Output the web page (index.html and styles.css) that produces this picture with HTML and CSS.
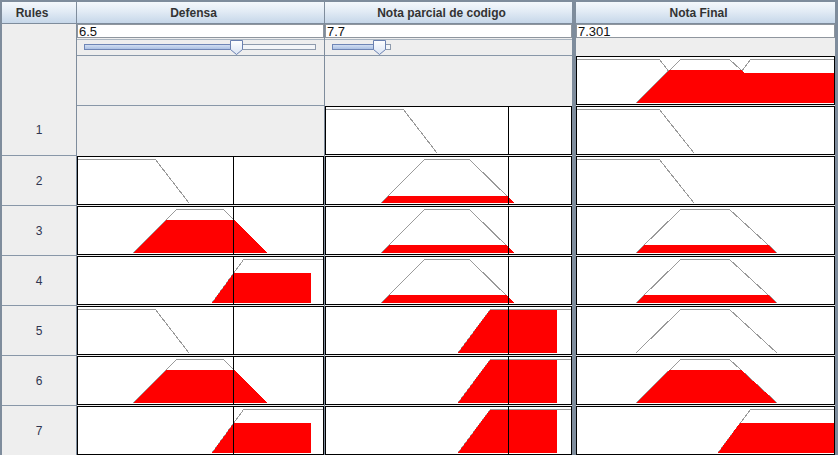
FILE: index.html
```html
<!DOCTYPE html>
<html>
<head>
<meta charset="utf-8">
<link rel="stylesheet" href="styles.css">
</head>
<body>
<div class="table">
  <div class="hd c1 rh">Rules</div>
  <div class="hd c3 rh">Defensa</div>
  <div class="hd c5 rh">Nota parcial de codigo</div>
  <div class="hd c7 rh">Nota Final</div>

  <!-- row 0: inputs -->
  <div class="rl c1 r0"></div>
  <div class="inp c3 r0">
    <div class="field">6.5</div>
    <div class="slider">
      <svg width="247" height="15" viewBox="77 40 247 15">
        <defs>
          <linearGradient id="tf" x1="0" y1="0" x2="0" y2="1"><stop offset="0" stop-color="#d6e2f4"/><stop offset="1" stop-color="#a7bde2"/></linearGradient>
          <linearGradient id="th" x1="0" y1="0" x2="0" y2="1"><stop offset="0" stop-color="#ffffff"/><stop offset="1" stop-color="#d9e3f3"/></linearGradient>
        </defs>
        <rect class="trk" x="84.5" y="44.5" width="231" height="5"/>
        <rect class="trkf" x="84.5" y="44.5" width="152" height="5"/>
        <path class="thumb" d="M230.5 40.5 H242.5 V49.5 L236.5 54.5 L230.5 49.5 Z"/>
      </svg>
    </div>
  </div>
  <div class="inp c5 r0">
    <div class="field">7.7</div>
    <div class="slider">
      <svg width="247" height="15" viewBox="325 40 247 15">
        <rect class="trk" x="332.5" y="44.5" width="58" height="5"/>
        <rect class="trkf" x="332.5" y="44.5" width="47" height="5"/>
        <path class="thumb" d="M373.5 40.5 H385.5 V49.5 L379.5 54.5 L373.5 49.5 Z"/>
      </svg>
    </div>
  </div>
  <div class="inp c7 r0">
    <div class="field">7.301</div>
    <div class="agg">
      <div class="box">
        <svg width="257" height="47" viewBox="577 57 257 47">
          <polyline class="ol" points="577,59 659,59 694,103"/>
          <polyline class="ol" points="636,103 681,59 729,59 777,103"/>
          <polyline class="ol" points="718,103 751,59 834,59"/>
          <polygon class="red" points="636,103 670,70 741,70 744,73 834,73 834,103"/>
        </svg>
      </div>
    </div>
  </div>

  <!-- row 1 -->
  <div class="rl c1 r1">1</div>
  <div class="empty c3 r1"></div>
  <div class="cell c5 r1"><div class="box"><svg width="245" height="47" viewBox="326 107 245 47">
    <polyline class="ol" points="326,109 403,109 437,153"/>
    <rect class="vl" x="508" y="107" width="1" height="47"/>
  </svg></div></div>
  <div class="cell c7 r1"><div class="box"><svg width="257" height="47" viewBox="577 107 257 47">
    <polyline class="ol" points="577,109 659,109 694,153"/>
  </svg></div></div>

  <!-- row 2 -->
  <div class="rl c1 r2 sep">2</div>
  <div class="cell c3 r2"><div class="box"><svg width="245" height="47" viewBox="78 157 245 47">
    <polyline class="ol" points="78,159 155,159 189,203"/>
    <rect class="vl" x="233" y="157" width="1" height="47"/>
  </svg></div></div>
  <div class="cell c5 r2"><div class="box"><svg width="245" height="47" viewBox="326 157 245 47">
    <polyline class="ol" points="381,203 425,159 469,159 514,203"/>
    <polygon class="red" points="381,203 388,196 507,196 514,203"/>
    <rect class="vl" x="508" y="157" width="1" height="47"/>
  </svg></div></div>
  <div class="cell c7 r2"><div class="box"><svg width="257" height="47" viewBox="577 157 257 47">
    <polyline class="ol" points="577,159 659,159 694,203"/>
  </svg></div></div>

  <!-- row 3 -->
  <div class="rl c1 r3 sep">3</div>
  <div class="cell c3 r3"><div class="box"><svg width="245" height="47" viewBox="78 207 245 47">
    <polyline class="ol" points="133,253 177,209 223,209 267,253"/>
    <polygon class="red" points="133,253 166,220 234,220 267,253"/>
    <rect class="vl" x="233" y="207" width="1" height="47"/>
  </svg></div></div>
  <div class="cell c5 r3"><div class="box"><svg width="245" height="47" viewBox="326 207 245 47">
    <polyline class="ol" points="381,253 425,209 469,209 514,253"/>
    <polygon class="red" points="381,253 389,245 506,245 514,253"/>
    <rect class="vl" x="508" y="207" width="1" height="47"/>
  </svg></div></div>
  <div class="cell c7 r3"><div class="box"><svg width="257" height="47" viewBox="577 207 257 47">
    <polyline class="ol" points="636,253 681,209 729,209 777,253"/>
    <polygon class="red" points="636,253 644,245 768,245 777,253"/>
  </svg></div></div>

  <!-- row 4 -->
  <div class="rl c1 r4 sep">4</div>
  <div class="cell c3 r4"><div class="box"><svg width="245" height="47" viewBox="78 257 245 47">
    <polyline class="ol" points="212,303 244,259 323,259"/>
    <polygon class="red" points="212,303 234,273 311,273 311,303"/>
    <rect class="vl" x="233" y="257" width="1" height="47"/>
  </svg></div></div>
  <div class="cell c5 r4"><div class="box"><svg width="245" height="47" viewBox="326 257 245 47">
    <polyline class="ol" points="381,303 425,259 469,259 514,303"/>
    <polygon class="red" points="381,303 389,295 506,295 514,303"/>
    <rect class="vl" x="508" y="257" width="1" height="47"/>
  </svg></div></div>
  <div class="cell c7 r4"><div class="box"><svg width="257" height="47" viewBox="577 257 257 47">
    <polyline class="ol" points="636,303 681,259 729,259 777,303"/>
    <polygon class="red" points="636,303 644,295 768,295 777,303"/>
  </svg></div></div>

  <!-- row 5 -->
  <div class="rl c1 r5 sep">5</div>
  <div class="cell c3 r5"><div class="box"><svg width="245" height="47" viewBox="78 307 245 47">
    <polyline class="ol" points="78,309 155,309 189,353"/>
    <rect class="vl" x="233" y="307" width="1" height="47"/>
  </svg></div></div>
  <div class="cell c5 r5"><div class="box"><svg width="245" height="47" viewBox="326 307 245 47">
    <polyline class="ol" points="458,353 491,309 571,309"/>
    <polygon class="red" points="458,353 490,310 557,310 557,353"/>
    <rect class="vl" x="508" y="307" width="1" height="47"/>
  </svg></div></div>
  <div class="cell c7 r5"><div class="box"><svg width="257" height="47" viewBox="577 307 257 47">
    <polyline class="ol" points="636,353 681,309 729,309 777,353"/>
  </svg></div></div>

  <!-- row 6 -->
  <div class="rl c1 r6 sep">6</div>
  <div class="cell c3 r6"><div class="box"><svg width="245" height="47" viewBox="78 357 245 47">
    <polyline class="ol" points="133,403 177,359 223,359 267,403"/>
    <polygon class="red" points="133,403 166,370 234,370 267,403"/>
    <rect class="vl" x="233" y="357" width="1" height="47"/>
  </svg></div></div>
  <div class="cell c5 r6"><div class="box"><svg width="245" height="47" viewBox="326 357 245 47">
    <polyline class="ol" points="458,403 491,359 571,359"/>
    <polygon class="red" points="458,403 490,360 557,360 557,403"/>
    <rect class="vl" x="508" y="357" width="1" height="47"/>
  </svg></div></div>
  <div class="cell c7 r6"><div class="box"><svg width="257" height="47" viewBox="577 357 257 47">
    <polyline class="ol" points="636,403 681,359 729,359 777,403"/>
    <polygon class="red" points="636,403 670,370 741,370 777,403"/>
  </svg></div></div>

  <!-- row 7 -->
  <div class="rl c1 r7 sep">7</div>
  <div class="cell c3 r7"><div class="box"><svg width="245" height="47" viewBox="78 407 245 47">
    <polyline class="ol" points="212,453 244,409 323,409"/>
    <polygon class="red" points="212,453 234,423 311,423 311,453"/>
    <rect class="vl" x="233" y="407" width="1" height="47"/>
  </svg></div></div>
  <div class="cell c5 r7"><div class="box"><svg width="245" height="47" viewBox="326 407 245 47">
    <polyline class="ol" points="458,453 491,409 571,409"/>
    <polygon class="red" points="458,453 490,410 557,410 557,453"/>
    <rect class="vl" x="508" y="407" width="1" height="47"/>
  </svg></div></div>
  <div class="cell c7 r7"><div class="box"><svg width="257" height="47" viewBox="577 407 257 47">
    <polyline class="ol" points="718,453 751,409 834,409"/>
    <polygon class="red" points="718,453 740,423 834,423 834,453"/>
  </svg></div></div>
</div>
</body>
</html>
```
FILE: styles.css
```css
html, body {
  margin: 0;
  padding: 0;
  background: #eeeeee;
}
body {
  font-family: "Liberation Sans", Arial, sans-serif;
  font-size: 12px;
}
.table {
  width: 838px;
  height: 455px;
  box-sizing: border-box;
  padding: 2px 3px 0 2px;
  background: #7e8c9c;
  display: grid;
  grid-template-columns: 74px 1px 247px 1px 247px 4px 259px;
  grid-template-rows: 21px 1px 81px repeat(7, 50px);
  overflow: hidden;
}
.c1 { grid-column: 1; }
.c3 { grid-column: 3; }
.c5 { grid-column: 5; }
.c7 { grid-column: 7; }
.rh { grid-row: 1; }
.r0 { grid-row: 3; }
.r1 { grid-row: 4; }
.r2 { grid-row: 5; }
.r3 { grid-row: 6; }
.r4 { grid-row: 7; }
.r5 { grid-row: 8; }
.r6 { grid-row: 9; }
.r7 { grid-row: 10; }

.hd {
  background: linear-gradient(to bottom, #f4f8fc 0%, #e2ebf5 45%, #c6d7e9 100%);
  color: #333333;
  font-weight: bold;
  font-size: 12px;
  display: flex;
  align-items: center;
  justify-content: center;
  line-height: 14px;
  padding-right: 14px;
}

.rl {
  background: #eeeeee;
  color: #2e3550;
  display: flex;
  align-items: center;
  justify-content: center;
  box-sizing: border-box;
}
.rl.sep {
  border-top: 1px solid #8897a8;
}

.inp {
  background: #eeeeee;
  display: flex;
  flex-direction: column;
}
.field {
  height: 14px;
  box-sizing: border-box;
  border: 1px solid #8f969e;
  background: #ffffff;
  color: #111111;
  font-size: 13px;
  line-height: 11px;
  padding: 1px 0 0 1px;
  overflow: hidden;
}
.slider {
  margin-top: 1px;
  height: 17px;
  box-sizing: border-box;
  border-top: 1px solid #a9b4c0;
  border-bottom: 1px solid #8897a8;
}
.slider svg {
  display: block;
}
.trk {
  fill: #f3f5f8;
  stroke: #8e9bad;
  stroke-width: 1;
}
.trkf {
  fill: url(#tf);
  stroke: #6f86b6;
  stroke-width: 1;
}
.thumb {
  fill: url(#th);
  stroke: #6a80b0;
  stroke-width: 1;
}
.agg {
  margin-top: 18px;
}

.empty {
  background: #eeeeee;
  border-top: 1px solid #8897a8;
  box-sizing: border-box;
}
.cell {
  background: #eeeeee;
  padding-top: 1px;
  box-sizing: border-box;
}
.box {
  height: 49px;
  box-sizing: border-box;
  border: 1px solid #000000;
  background: #ffffff;
  overflow: hidden;
}
.box svg {
  display: block;
}
.ol {
  fill: none;
  stroke: #9a9a9a;
  stroke-width: 1;
  shape-rendering: crispEdges;
}
.red {
  fill: #ff0000;
  shape-rendering: crispEdges;
}
.vl {
  fill: #000000;
  shape-rendering: crispEdges;
}
```
